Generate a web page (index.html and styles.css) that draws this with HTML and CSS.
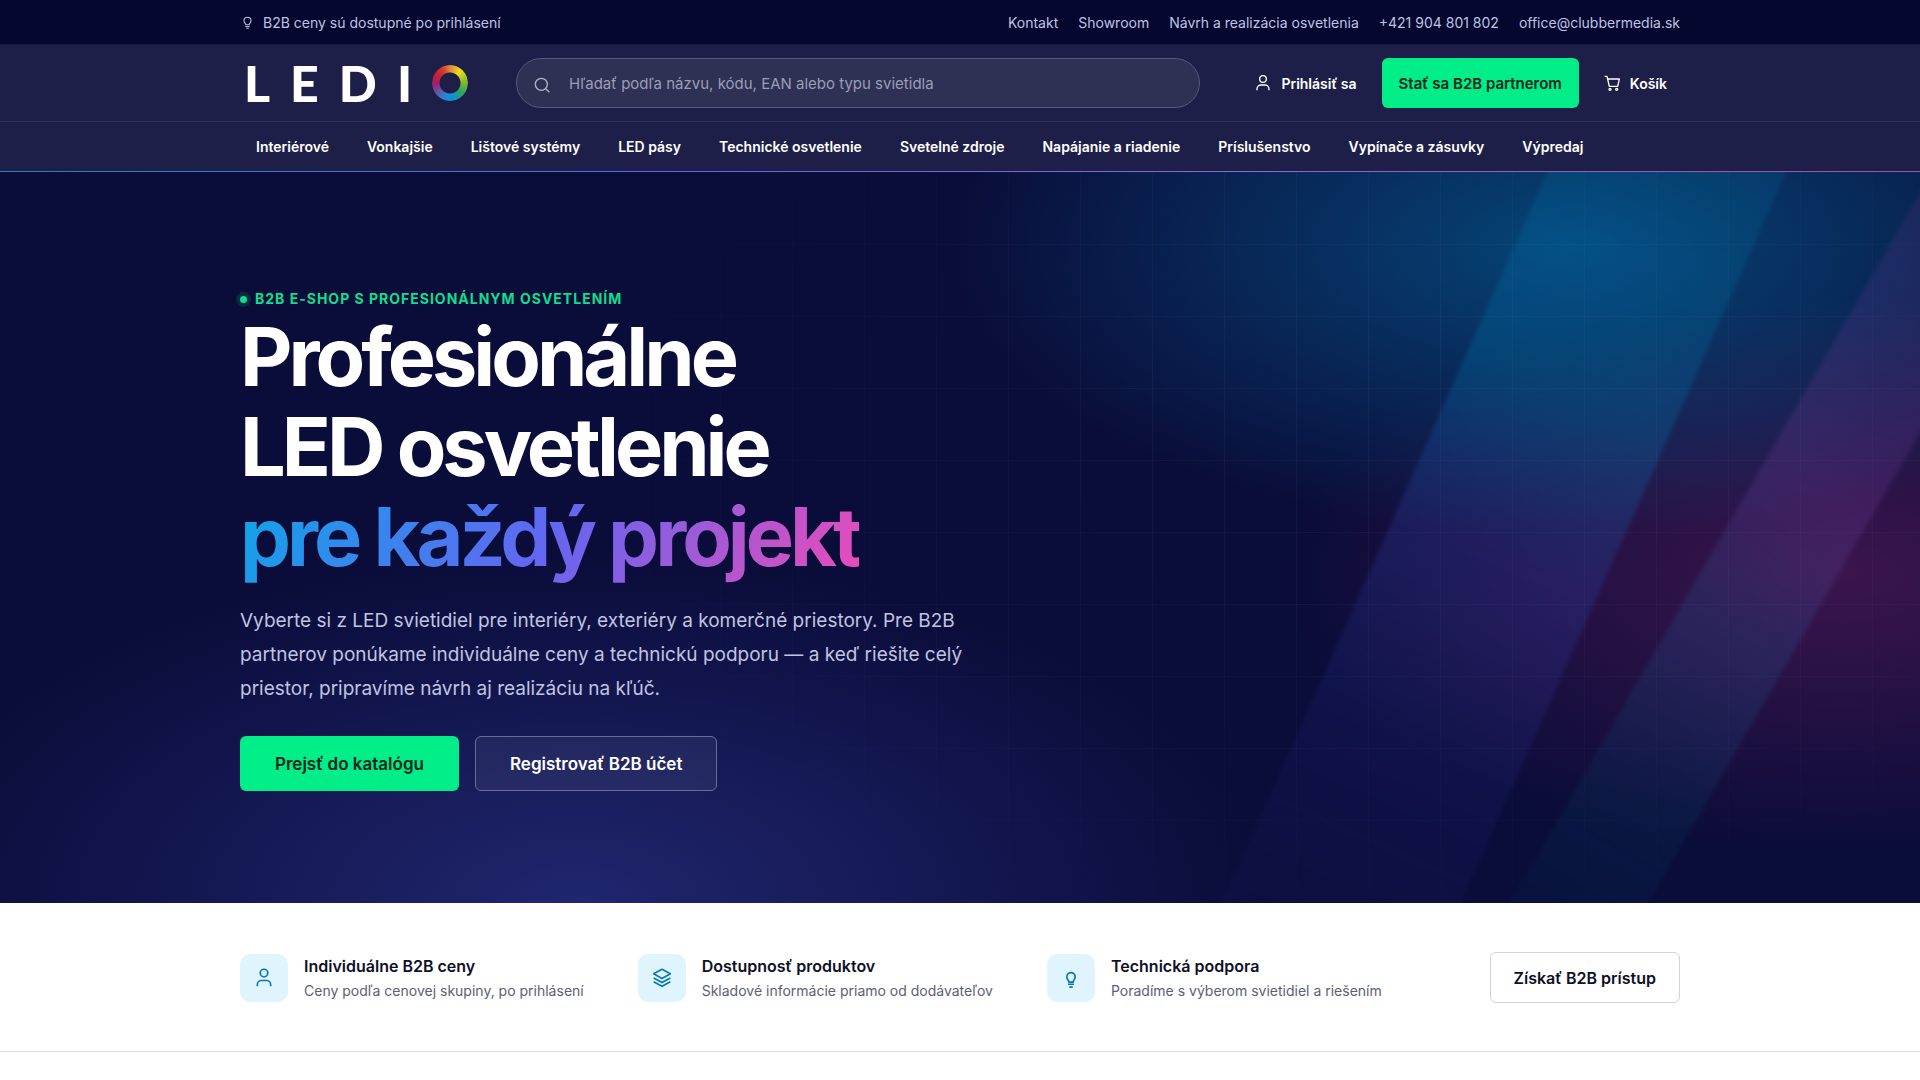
FILE: index.html
```html
<!DOCTYPE html>
<html lang="sk">
<head>
<meta charset="utf-8">
<meta name="viewport" content="width=device-width, initial-scale=1">
<title>LEDIO – B2B e-shop s profesionálnym osvetlením</title>
<link rel="stylesheet" href="styles.css">
</head>
<body>
<div class="topbar">
  <div class="container topbar-inner">
    <p class="topbar-note">
      <svg class="icon-bulb-small" viewBox="0 0 24 24" aria-hidden="true"><path d="M9 16c0-2-3.500-3.300-3.500-7.200a6.500 6.500 0 0 1 13 0C18.500 12.700 15 14 15 16zM8 19.500h8M9.500 22.500h5"/></svg>
      B2B ceny sú dostupné po prihlásení
    </p>
    <nav class="topbar-links" aria-label="Kontaktné odkazy">
      <a href="#">Kontakt</a>
      <a href="#">Showroom</a>
      <a href="#">Návrh a realizácia osvetlenia</a>
      <a href="#">+421 904 801 802</a>
      <a href="#">office@clubbermedia.sk</a>
    </nav>
  </div>
</div>

<header class="header">
  <div class="container header-main">
    <a class="logo" href="#" aria-label="LEDIO">
      <span class="logo-letter">L</span><span class="logo-letter">E</span><span class="logo-letter">D</span><span class="logo-letter">I</span><span class="logo-ring"></span>
    </a>
    <form class="search" role="search">
      <svg class="icon search-icon" viewBox="0 0 24 24" aria-hidden="true"><circle cx="11" cy="11" r="9"/><path d="M18 18l5 5"/></svg>
      <input class="search-input" type="search" aria-label="Hľadať" placeholder="Hľadať podľa názvu, kódu, EAN alebo typu svietidla">
    </form>
    <div class="actions">
      <a class="action" href="#">
        <svg class="icon" viewBox="0 0 24 24" aria-hidden="true"><circle cx="12" cy="6" r="5"/><path d="M3 23v-2a6 6 0 0 1 6-6h6a6 6 0 0 1 6 6v2"/></svg>
        Prihlásiť sa
      </a>
      <button class="btn btn-partner" type="button">Stať sa B2B partnerom</button>
      <a class="action" href="#">
        <svg class="icon" viewBox="0 0 24 24" aria-hidden="true"><path d="M1 2h3.500l3.500 15h12.500L23 6H5.500"/><circle cx="9" cy="21.500" r="1.500"/><circle cx="19" cy="21.500" r="1.500"/></svg>
        Košík
      </a>
    </div>
  </div>
  <nav class="mainnav" aria-label="Kategórie">
    <div class="container mainnav-inner">
      <a href="#">Interiérové</a>
      <a href="#">Vonkajšie</a>
      <a href="#">Lištové systémy</a>
      <a href="#">LED pásy</a>
      <a href="#">Technické osvetlenie</a>
      <a href="#">Svetelné zdroje</a>
      <a href="#">Napájanie a riadenie</a>
      <a href="#">Príslušenstvo</a>
      <a href="#">Vypínače a zásuvky</a>
      <a href="#">Výpredaj</a>
    </div>
  </nav>
</header>

<main>
  <section class="hero">
    <div class="hero-grid"></div>
    <div class="beam beam-wide"></div>
    <div class="beam beam-narrow"></div>
    <div class="container hero-content">
      <p class="eyebrow"><span class="eyebrow-dot"></span>B2B e-shop s profesionálnym osvetlením</p>
      <h1 class="hero-title">Profesionálne<br>LED osvetlenie<br><span class="hero-accent">pre každý projekt</span></h1>
      <p class="hero-text">Vyberte si z LED svietidiel pre interiéry, exteriéry a komerčné priestory. Pre B2B partnerov ponúkame individuálne ceny a technickú podporu — a keď riešite celý priestor, pripravíme návrh aj realizáciu na kľúč.</p>
      <div class="hero-buttons">
        <button class="btn btn-primary" type="button">Prejsť do katalógu</button>
        <button class="btn btn-ghost" type="button">Registrovať B2B účet</button>
      </div>
    </div>
  </section>

  <section class="benefits">
    <div class="container benefits-inner">
      <div class="benefit">
        <span class="benefit-icon"><svg class="icon icon-large" viewBox="0 0 24 24" aria-hidden="true"><circle cx="12" cy="6" r="4.500"/><path d="M4 22v-2a5 5 0 0 1 5-5h6a5 5 0 0 1 5 5v2"/></svg></span>
        <div><h2>Individuálne B2B ceny</h2><p>Ceny podľa cenovej skupiny, po prihlásení</p></div>
      </div>
      <div class="benefit">
        <span class="benefit-icon"><svg class="icon icon-large" viewBox="0 0 24 24" aria-hidden="true"><path d="M12 1.500l10 5.500-10 5.500L2 7zM2 12l10 5.500L22 12M2 16.500L12 22l10-5.500"/></svg></span>
        <div><h2>Dostupnosť produktov</h2><p>Skladové informácie priamo od dodávateľov</p></div>
      </div>
      <div class="benefit">
        <span class="benefit-icon"><svg class="icon icon-large" viewBox="0 0 24 24" aria-hidden="true"><path d="M9.500 17c0-2-2.500-3-2.500-6.500a5 5 0 0 1 10 0c0 3.500-2.500 4.500-2.500 6.500zM8.500 19.500h7M10 23h4"/></svg></span>
        <div><h2>Technická podpora</h2><p>Poradíme s výberom svietidiel a riešením</p></div>
      </div>
      <button class="btn btn-outline" type="button">Získať B2B prístup</button>
    </div>
  </section>
</main>
</body>
</html>
```
FILE: styles.css
```css
* { box-sizing: border-box; }

body {
  margin: 0;
  background: #fff;
  color: #0d1026;
  font-family: Inter, "Noto Sans", sans-serif;
  font-size: 14px;
}

h1, h2, p { margin: 0; }
a { color: inherit; text-decoration: none; }
button { font: inherit; cursor: pointer; }

.container {
  max-width: 1488px;
  margin: 0 auto;
  padding: 0 24px;
}

.icon {
  width: 16px;
  height: 16px;
  fill: none;
  stroke: currentColor;
  stroke-width: 2;
  stroke-linejoin: round;
  overflow: visible;
}
.icon-large {
  width: 20px;
  height: 20px;
}

/* Top bar */
.topbar {
  background: #05072f;
  color: #bfc3e3;
  border-bottom: 1px solid #14163f;
}
.topbar-inner {
  display: flex;
  justify-content: space-between;
  align-items: center;
  height: 44px;
}
.topbar-note {
  display: flex;
  align-items: center;
  gap: 8px;
}
.icon-bulb-small {
  width: 15px;
  height: 13px;
  fill: none;
  stroke: currentColor;
  stroke-width: 2;
}
.topbar-links { display: flex; gap: 20px; }

/* Header */
.header {
  background: #1e1f48;
  color: #fff;
  border-bottom: 1px solid;
  border-image: linear-gradient(90deg, #2384b8, #6468d8 35%, #8a66cc 65%, #a0529c) 1;
}
.header-main {
  display: flex;
  align-items: center;
  height: 76px;
}
.logo {
  display: flex;
  align-items: center;
  width: 276px;
  padding-left: 4px;
  font-family: Lato, "Open Sans", sans-serif;
  font-size: 50px;
  font-weight: 900;
  line-height: 50px;
}
.logo-letter { margin-right: 20px; }
.logo-ring {
  width: 36px;
  height: 36px;
  border-radius: 50%;
  background: conic-gradient(#e08a3c, #f0dc12 40deg, #8fbf2f 80deg, #35a650 125deg, #0e94c8 165deg, #1590dc 190deg, #5a5fae 230deg, #a01f6c 265deg, #c8202f 305deg, #d8402c 335deg, #e08a3c);
  mask: radial-gradient(circle, transparent 10px, #000 11px);
}
.search {
  position: relative;
  flex: 0 1 684px;
}
.search-icon {
  position: absolute;
  left: 18px;
  top: 19px;
  color: #b3b4c8;
}
.search-input {
  display: block;
  width: 100%;
  height: 50px;
  padding: 0 24px 0 52px;
  border: 1px solid #56587c;
  border-radius: 25px;
  background: #2e3054;
  color: #fff;
  font: inherit;
  font-size: 15px;
}
.search-input::placeholder { color: #9c9db5; opacity: 1; }
.actions {
  display: flex;
  align-items: center;
  gap: 12px;
  margin-left: auto;
}
.action {
  display: flex;
  align-items: center;
  gap: 10px;
  padding: 0 13px;
  font-size: 14px;
  font-weight: 600;
}
.btn {
  border: 1px solid transparent;
  border-radius: 6px;
  font-weight: 600;
  white-space: nowrap;
}
.btn-partner {
  height: 50px;
  padding: 0 16px;
  background: #00ed87;
  color: #06251f;
  font-size: 15px;
}
.mainnav { border-top: 1px solid #2e3056; }
.mainnav-inner {
  display: flex;
  align-items: center;
  gap: 38px;
  height: 49px;
  font-size: 14px;
  font-weight: 600;
}
.mainnav-inner a:first-child { margin-left: 16px; }

/* Hero */
.hero {
  position: relative;
  overflow: hidden;
  background:
    radial-gradient(ellipse 33% 40% at 82% 10%, rgba(0, 125, 180, .5), transparent),
    radial-gradient(ellipse 29% 38% at 96% 55%, rgba(140, 35, 110, .38), transparent),
    radial-gradient(ellipse 36% 48% at 30% 100%, rgba(56, 66, 170, .48), transparent),
    #0a0c39;
  color: #fff;
}
.hero-grid {
  position: absolute;
  inset: 0;
  background:
    linear-gradient(90deg, rgba(255, 255, 255, .04) 1px, transparent 1px) 0 0 / 72px 72px,
    linear-gradient(rgba(255, 255, 255, .04) 1px, transparent 1px) 0 0 / 72px 72px;
  mask: radial-gradient(ellipse 48% 70% at 72% 40%, #000 30%, transparent);
}
.beam {
  position: absolute;
  filter: blur(2px);
}
.beam-wide {
  top: -20%;
  right: 16%;
  width: 218px;
  height: 140%;
  transform: rotate(24deg);
  background: linear-gradient(rgba(0, 150, 200, .1), rgba(0, 130, 190, .25) 35%, rgba(50, 70, 180, .26) 52%, rgba(40, 50, 150, .15) 75%, rgba(60, 30, 110, .06));
}
.beam-narrow {
  top: -20%;
  right: 70px;
  width: 120px;
  height: 140%;
  transform: rotate(30deg);
  background: linear-gradient(rgba(130, 50, 140, .1), rgba(110, 60, 150, .28) 45%, rgba(40, 90, 150, .25) 60%, rgba(0, 110, 150, .12) 78%, rgba(0, 110, 150, .04));
}
.hero-content {
  position: relative;
  padding-top: 116px;
  padding-bottom: 112px;
}
.eyebrow {
  display: flex;
  align-items: center;
  gap: 8px;
  margin-bottom: 2px;
  color: #0fdf8c;
  font-size: 14px;
  font-weight: 700;
  line-height: 22px;
  letter-spacing: 1px;
  text-transform: uppercase;
}
.eyebrow-dot {
  width: 7px;
  height: 7px;
  border-radius: 50%;
  background: #0fdf8c;
  box-shadow: 0 0 0 4px rgba(15, 223, 140, .14);
}
.hero-title {
  font-size: 81px;
  font-weight: 700;
  line-height: 90px;
  letter-spacing: -4px;
}
.hero-accent {
  background: linear-gradient(120deg, #0ea5e9, #6366f1 50%, #ec4bb8);
  background-clip: text;
  color: transparent;
}
.hero-text {
  max-width: 760px;
  margin: 22px 0 30px;
  color: #c0c4e0;
  font-size: 19px;
  line-height: 34px;
}
.hero-buttons { display: flex; gap: 16px; }
.btn-primary, .btn-ghost {
  height: 55px;
  padding: 0 34px;
  font-size: 17px;
}
.btn-primary { background: #00ed87; color: #06251f; }
.btn-ghost {
  border-color: #696b98;
  background: rgba(255, 255, 255, .06);
  color: #fff;
}

/* Benefits */
.benefits { border-bottom: 1px solid #dfe1e5; }
.benefits-inner {
  display: flex;
  align-items: center;
  gap: 54px;
  padding-top: 49px;
  padding-bottom: 48px;
}
.benefit {
  display: flex;
  align-items: center;
  gap: 16px;
}
.benefit-icon {
  display: grid;
  place-items: center;
  width: 48px;
  height: 48px;
  border-radius: 10px;
  background: #e0f4fd;
  color: #0879ad;
}
.benefit h2 {
  font-size: 16px;
  font-weight: 600;
  line-height: 26px;
}
.benefit p {
  color: #5c6075;
  font-size: 14px;
  line-height: 24px;
}
.btn-outline {
  height: 51px;
  margin-left: auto;
  padding: 0 23px;
  border-color: #d1d3dd;
  background: #fff;
  color: #0d1026;
  font-size: 16px;
}
```
